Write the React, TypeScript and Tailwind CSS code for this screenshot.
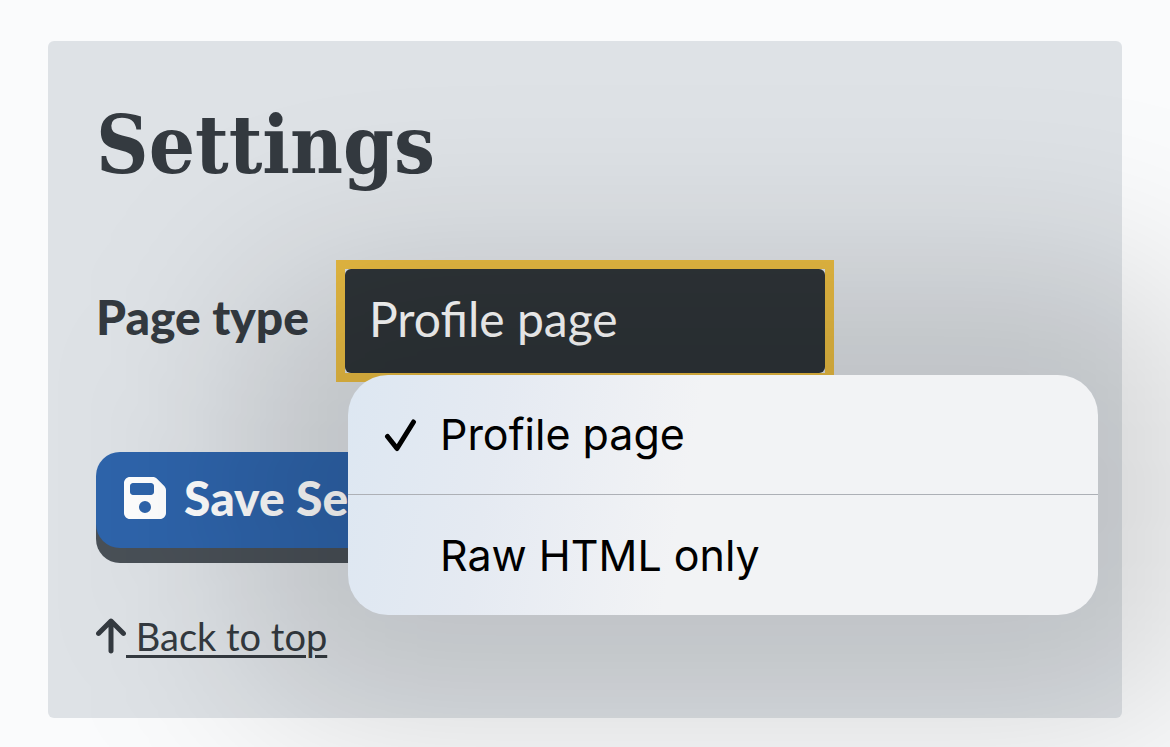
import React, { useState } from 'react';
import { FaArrowUp, FaFloppyDisk } from 'react-icons/fa6';

const pageTypes = ['Profile page', 'Raw HTML only'];

export default function App() {
  const [pageType, setPageType] = useState(pageTypes[0]);
  const [open, setOpen] = useState(true);

  const choose = (type: string) => {
    setPageType(type);
    setOpen(false);
  };

  return (
    <div className="min-h-screen overflow-hidden bg-[#fafbfc] px-12 pt-[41px] pb-7 font-[Lato,sans-serif] text-[#343a40]">
      <main id="top" className="rounded-md bg-[#dee2e6] px-12 pt-12 pb-14">
        <h1 className="font-['DejaVu_Serif_Condensed','DejaVu_Serif',serif] text-[81px] leading-[112px] font-bold">
          Settings
        </h1>

        <form onSubmit={e => e.preventDefault()}>
          {/* Page type */}
          <div className="mt-[59px] flex items-center gap-[27px]">
            <label htmlFor="page-type" className="pb-2 font-['Lato_Black',Lato,sans-serif] text-5xl font-black whitespace-nowrap">
              Page type
            </label>

            <div className="relative shrink-0 border-[9px] border-[#e8bb42] bg-[#dee2e6]">
              <select
                id="page-type"
                value={pageType}
                onChange={e => setPageType(e.target.value)}
                onMouseDown={e => {
                  e.preventDefault();
                  setOpen(!open);
                }}
                className="block h-[104px] w-[480px] appearance-none rounded-md bg-[#2e3438] px-6 pb-1 text-[48px] leading-[64px] text-white outline-none"
              >
                {pageTypes.map(type => (
                  <option key={type}>{type}</option>
                ))}
              </select>

              {/* Open menu, over the rest of the form */}
              {open && (
                <div className="absolute top-[106px] left-[3px] z-10 w-[750px]">
                  <div className="pointer-events-none absolute -inset-[110px] rounded-[120px] bg-black/14 blur-[90px]" />
                  <div className="relative divide-y divide-[#adb0b6] overflow-hidden rounded-[40px] bg-[#f2f3f5] bg-[linear-gradient(100deg,#dde7f2_0%,#e5eaf2_20%,#f2f3f5_45%)] font-[Inter,sans-serif] text-black">
                    {pageTypes.map(type => (
                      <button
                        key={type}
                        type="button"
                        onClick={() => choose(type)}
                        className="flex h-[120px] w-full items-center gap-[22px] pl-9 text-left text-[43px]"
                      >
                        <svg viewBox="0 0 34 36" className="h-9 w-[34px]" fill="none" stroke="currentColor" strokeWidth="5" strokeLinecap="round" strokeLinejoin="round">
                          {type === pageType && <path d="M3.5 19.5 13 31.5 29.5 5" />}
                        </svg>
                        {type}
                      </button>
                    ))}
                  </div>
                </div>
              )}
            </div>
          </div>

          <button
            type="submit"
            className="mt-[70px] flex h-24 items-center gap-[18px] rounded-3xl bg-[#2e64ab] px-7 pb-1 font-['Lato_Black',Lato,sans-serif] text-5xl font-black text-white shadow-[0_15px_0_#495057]"
          >
            <FaFloppyDisk size={48} className="-mx-[3px]" />
            Save Settings
          </button>
        </form>

        <a href="#top" className="mt-16 inline-flex items-center text-[38px] leading-[48px]">
          <FaArrowUp className="h-10 w-[30px]" />
          <span className="whitespace-pre underline decoration-[3px] underline-offset-4"> Back to top</span>
        </a>
      </main>
    </div>
  );
}
